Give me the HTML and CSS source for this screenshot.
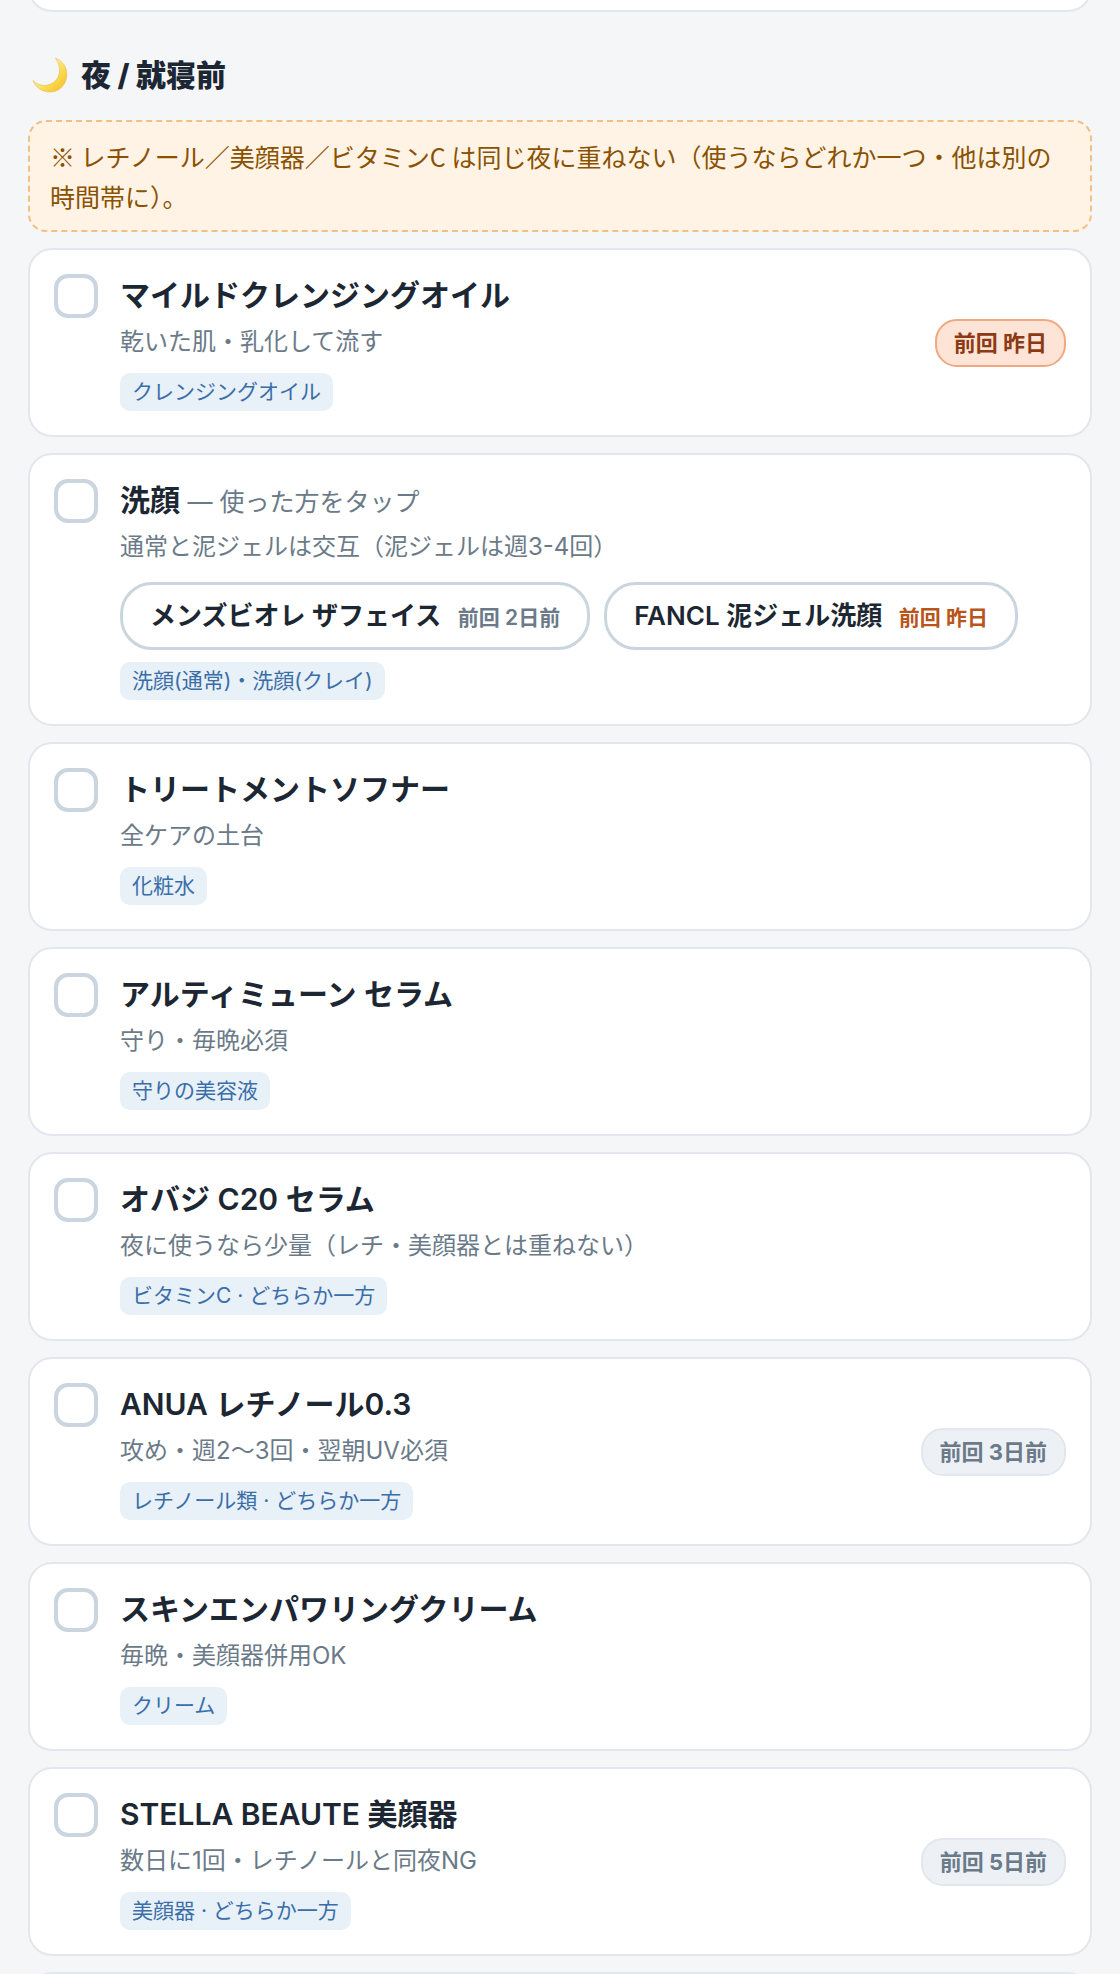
FILE: index.html
```
<!DOCTYPE html>
<html lang="ja">
<head>
  <meta charset="UTF-8">
  <meta name="viewport" content="width=device-width, initial-scale=1">
  <title>スキンケア</title>
  <link rel="stylesheet" href="styles.css">
</head>
<body>
  <main class="routine">
    <div class="card card-prev"></div>

    <h2 class="section-title">
      <svg class="moon" viewBox="0 0 36 36" aria-hidden="true">
        <defs>
          <linearGradient id="moonFill" x1="0" y1="0" x2="1" y2="1">
            <stop offset="0.3" stop-color="#fff0a0"/>
            <stop offset="0.65" stop-color="#fbd84b"/>
            <stop offset="1" stop-color="#f3b92c"/>
          </linearGradient>
        </defs>
        <path d="M23.5 1.2C31 4 35.2 10.5 34.8 18.2C34.2 28 27 35 18 35C10 35 3.5 30.5 1 23.5C5.5 28.5 13.5 30 20 26.5C28.5 22 30 10.5 23.5 1.2Z" fill="url(#moonFill)" stroke="#e0b040" stroke-width="0.5"/>
      </svg>
      <span>夜 / 就寝前</span>
    </h2>

    <p class="note">※ レチノール／美顔器／ビタミンC は同じ夜に重ねない（使うならどれか一つ・他は別の時間帯に）。</p>

    <div class="card">
      <input type="checkbox" class="check" id="oil">
      <div class="info">
        <label class="name" for="oil">マイルドクレンジングオイル</label>
        <p class="desc">乾いた肌・乳化して流す</p>
        <span class="tag">クレンジングオイル</span>
      </div>
      <span class="last recent">前回 昨日</span>
    </div>

    <div class="card">
      <input type="checkbox" class="check" id="wash">
      <div class="info">
        <label class="name" for="wash">洗顔 <span class="hint">— 使った方をタップ</span></label>
        <p class="desc">通常と泥ジェルは交互（泥ジェルは週3-4回）</p>
        <div class="choices">
          <button type="button" class="choice">メンズビオレ ザフェイス <span class="when">前回 2日前</span></button>
          <button type="button" class="choice">FANCL 泥ジェル洗顔 <span class="when when-recent">前回 昨日</span></button>
        </div>
        <span class="tag">洗顔(通常)・洗顔(クレイ)</span>
      </div>
    </div>

    <div class="card">
      <input type="checkbox" class="check" id="softener">
      <div class="info">
        <label class="name" for="softener">トリートメントソフナー</label>
        <p class="desc">全ケアの土台</p>
        <span class="tag">化粧水</span>
      </div>
    </div>

    <div class="card">
      <input type="checkbox" class="check" id="ultimune">
      <div class="info">
        <label class="name" for="ultimune">アルティミューン セラム</label>
        <p class="desc">守り・毎晩必須</p>
        <span class="tag">守りの美容液</span>
      </div>
    </div>

    <div class="card">
      <input type="checkbox" class="check" id="obagi">
      <div class="info">
        <label class="name" for="obagi">オバジ C20 セラム</label>
        <p class="desc">夜に使うなら少量（レチ・美顔器とは重ねない）</p>
        <span class="tag">ビタミンC · どちらか一方</span>
      </div>
    </div>

    <div class="card">
      <input type="checkbox" class="check" id="anua">
      <div class="info">
        <label class="name" for="anua">ANUA レチノール0.3</label>
        <p class="desc">攻め・週2〜3回・翌朝UV必須</p>
        <span class="tag">レチノール類 · どちらか一方</span>
      </div>
      <span class="last">前回 3日前</span>
    </div>

    <div class="card">
      <input type="checkbox" class="check" id="cream">
      <div class="info">
        <label class="name" for="cream">スキンエンパワリングクリーム</label>
        <p class="desc">毎晩・美顔器併用OK</p>
        <span class="tag">クリーム</span>
      </div>
    </div>

    <div class="card">
      <input type="checkbox" class="check" id="stella">
      <div class="info">
        <label class="name" for="stella">STELLA BEAUTE 美顔器</label>
        <p class="desc">数日に1回・レチノールと同夜NG</p>
        <span class="tag">美顔器 · どちらか一方</span>
      </div>
      <span class="last">前回 5日前</span>
    </div>

    <div class="card"></div>
  </main>
</body>
</html>
```

FILE: styles.css
```
* {
  box-sizing: border-box;
}

body {
  margin: 0;
  height: 100vh;
  overflow: hidden;
  background-color: #f4f6f8;
  color: #1c2733;
  font-family: Inter, "Noto Sans CJK JP", sans-serif;
}

.routine {
  padding: 0 28px;
}

.card {
  display: flex;
  align-items: flex-start;
  gap: 22px;
  margin-bottom: 16px;
  padding: 24px;
  background-color: #fff;
  border: 2px solid #e2e7ee;
  border-radius: 24px;
}

/* end of the previous section, scrolled almost out of view */
.card-prev {
  height: 60px;
  margin-top: -48px;
  margin-bottom: 0;
}

.section-title {
  display: flex;
  align-items: center;
  gap: 13px;
  margin: 42px 0 24px;
  padding-left: 4px;
  font-size: 30px;
  line-height: 42px;
  font-weight: 800;
}

.moon {
  width: 36px;
  height: 36px;
}

.note {
  margin: 0 0 16px;
  padding: 14px 20px;
  background-color: #fff3e6;
  border: 2px dashed #f0c085;
  border-radius: 18px;
  color: #8a5200;
  font-family: "Noto Sans CJK JP", sans-serif;
  font-size: 25px;
  line-height: 40px;
}

.check {
  appearance: none;
  flex: none;
  width: 44px;
  height: 44px;
  margin: 0;
  background-color: #fff;
  border: 4px solid #cbd5df;
  border-radius: 14px;
  cursor: pointer;
}

.check:checked {
  background-color: #3a6ea8;
  border-color: #3a6ea8;
}

.info {
  flex: 1;
  min-width: 0;
}

.name {
  display: block;
  font-size: 30px;
  line-height: 42px;
  font-weight: 600;
}

.hint {
  color: #6b7a88;
  font-size: 25px;
  line-height: 1;
  font-weight: 400;
}

.desc {
  margin: 8px 0 13px;
  color: #6b7a88;
  font-size: 24px;
  line-height: 36px;
}

.tag {
  display: block;
  width: fit-content;
  padding: 0 12px;
  background-color: #e8f0f8;
  border-radius: 10px;
  color: #3a6ea8;
  font-size: 21px;
  line-height: 38px;
}

.choices {
  display: flex;
  flex-wrap: wrap;
  gap: 14px;
  margin: 17px 0 12px;
}

.choice {
  padding: 0 27px;
  background-color: #fff;
  border: 3px solid #cbd5df;
  border-radius: 32px;
  color: #1c2733;
  font-family: inherit;
  font-size: 26px;
  line-height: 62px;
  font-weight: 600;
  cursor: pointer;
}

.when {
  margin-left: 10px;
  color: #6b7a88;
  font-size: 21px;
  line-height: 1;
}

.when-recent {
  color: #b9541a;
}

.last {
  align-self: center;
  padding: 0 17px;
  background-color: #edf1f6;
  border: 2px solid #e2e7ee;
  border-radius: 22px;
  color: #6b7a88;
  font-size: 22px;
  line-height: 44px;
  font-weight: 700;
}

.recent {
  background-color: #fde4d6;
  border-color: #f0a880;
  color: #8c3a14;
}
```
